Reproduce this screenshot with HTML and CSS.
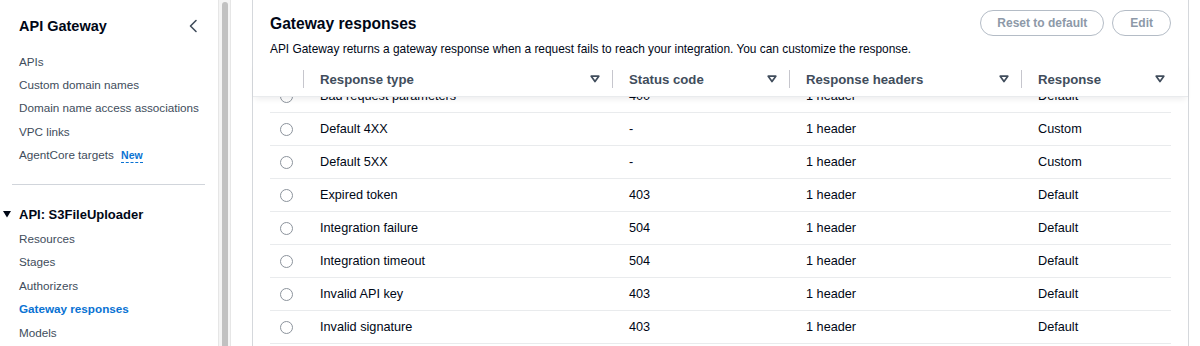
FILE: index.html
```html
<!DOCTYPE html>
<html lang="en">
<head>
    <meta charset="UTF-8">
    <meta name="viewport" content="width=device-width, initial-scale=1.0">
    <title>API Gateway - Gateway responses</title>
    <link rel="stylesheet" href="styles.css">
</head>
<body>
    <div class="page">
        <aside class="sidebar">
            <div class="side-head">
                <h2>API Gateway</h2>
                <button class="collapse" aria-label="Close navigation">
                    <svg width="10" height="14" viewBox="0 0 10 14"><path d="M8 1.5 L2.5 7 L8 12.5" fill="none" stroke="#414d5c" stroke-width="1.6" stroke-linecap="round" stroke-linejoin="round"/></svg>
                </button>
            </div>
            <ul class="side-nav">
                <li>APIs</li>
                <li>Custom domain names</li>
                <li>Domain name access associations</li>
                <li>VPC links</li>
                <li>AgentCore targets <span class="badge-new">New</span></li>
            </ul>
            <hr class="side-divider">
            <div class="side-section">
                <svg width="8" height="8" viewBox="0 0 8 8"><path d="M0 1 H8 L4 7.5 Z" fill="#000716"/></svg>
                <span>API: S3FileUploader</span>
            </div>
            <ul class="side-nav">
                <li>Resources</li>
                <li>Stages</li>
                <li>Authorizers</li>
                <li class="active">Gateway responses</li>
                <li>Models</li>
            </ul>
        </aside>

        <div class="scrollbar"><div class="thumb"></div></div>

        <main class="content">
            <section class="card">
                <div class="card-head">
                    <h1>Gateway responses</h1>
                    <div class="actions">
                        <button class="btn" disabled>Reset to default</button>
                        <button class="btn" disabled>Edit</button>
                    </div>
                </div>
                <p class="card-desc">API Gateway returns a gateway response when a request fails to reach your integration. You can customize the response.</p>

                <div class="table">
                    <div class="thead">
                        <div class="th"></div>
                        <div class="th"><span class="sep"></span><span class="label">Response type</span><svg class="sort" width="10" height="8" viewBox="0 0 10 8"><path d="M1.2 1.2 H8.8 L5 6.6 Z" fill="none" stroke="#414d5c" stroke-width="1.7" stroke-linejoin="round"/></svg></div>
                        <div class="th"><span class="sep"></span><span class="label">Status code</span><svg class="sort" width="10" height="8" viewBox="0 0 10 8"><path d="M1.2 1.2 H8.8 L5 6.6 Z" fill="none" stroke="#414d5c" stroke-width="1.7" stroke-linejoin="round"/></svg></div>
                        <div class="th"><span class="sep"></span><span class="label">Response headers</span><svg class="sort" width="10" height="8" viewBox="0 0 10 8"><path d="M1.2 1.2 H8.8 L5 6.6 Z" fill="none" stroke="#414d5c" stroke-width="1.7" stroke-linejoin="round"/></svg></div>
                        <div class="th last"><span class="sep"></span><span class="label">Response</span><svg class="sort" width="10" height="8" viewBox="0 0 10 8"><path d="M1.2 1.2 H8.8 L5 6.6 Z" fill="none" stroke="#414d5c" stroke-width="1.7" stroke-linejoin="round"/></svg></div>
                    </div>
                    <div class="tbody">
                        <div class="tr"><div class="td"><span class="radio"></span></div><div class="td">Bad request parameters</div><div class="td">400</div><div class="td">1 header</div><div class="td">Default</div></div>
                        <div class="tr"><div class="td"><span class="radio"></span></div><div class="td">Default 4XX</div><div class="td">-</div><div class="td">1 header</div><div class="td">Custom</div></div>
                        <div class="tr"><div class="td"><span class="radio"></span></div><div class="td">Default 5XX</div><div class="td">-</div><div class="td">1 header</div><div class="td">Custom</div></div>
                        <div class="tr"><div class="td"><span class="radio"></span></div><div class="td">Expired token</div><div class="td">403</div><div class="td">1 header</div><div class="td">Default</div></div>
                        <div class="tr"><div class="td"><span class="radio"></span></div><div class="td">Integration failure</div><div class="td">504</div><div class="td">1 header</div><div class="td">Default</div></div>
                        <div class="tr"><div class="td"><span class="radio"></span></div><div class="td">Integration timeout</div><div class="td">504</div><div class="td">1 header</div><div class="td">Default</div></div>
                        <div class="tr"><div class="td"><span class="radio"></span></div><div class="td">Invalid API key</div><div class="td">403</div><div class="td">1 header</div><div class="td">Default</div></div>
                        <div class="tr"><div class="td"><span class="radio"></span></div><div class="td">Invalid signature</div><div class="td">403</div><div class="td">1 header</div><div class="td">Default</div></div>
                    </div>
                </div>
            </section>
        </main>
    </div>
</body>
</html>
```

FILE: styles.css
```css
/* Reset */
* {
    margin: 0;
    padding: 0;
    box-sizing: border-box;
}

body {
    font-family: "Liberation Sans", Arial, sans-serif;
    background-color: #ffffff;
    color: #000716;
    height: 346px;
    overflow: hidden;
}

.page {
    display: flex;
    height: 346px;
}

/* Side navigation */
.sidebar {
    width: 218px;
    flex-shrink: 0;
    padding-top: 14px;
}

.side-head {
    display: flex;
    align-items: center;
    justify-content: space-between;
    height: 24px;
    padding: 0 20px 0 19px;
}

.side-head h2 {
    font-size: 14.5px;
    font-weight: bold;
    color: #000716;
}

.collapse {
    border: none;
    background: none;
    display: flex;
    padding: 0;
}

.side-nav {
    list-style: none;
    margin-top: 11.5px;
}

.side-nav li {
    font-size: 11.7px;
    line-height: 23.4px;
    padding-left: 19px;
    color: #414d5c;
}

.side-nav li.active {
    color: #0972d3;
    font-weight: bold;
}

.side-section + .side-nav {
    margin-top: 1px;
}

.badge-new {
    font-size: 10.5px;
    font-weight: bold;
    color: #0972d3;
    margin-left: 4px;
    border-bottom: 1px dashed #0972d3;
    padding-bottom: 1px;
}

.side-divider {
    border: none;
    border-top: 1px solid #d1d5db;
    margin: 16px 13px 0 12px;
}

.side-section {
    display: flex;
    align-items: center;
    gap: 8px;
    height: 24px;
    margin-top: 17.5px;
    padding-left: 3px;
    font-size: 13px;
    font-weight: bold;
    color: #000716;
}

/* Fake scrollbar */
.scrollbar {
    width: 13px;
    flex-shrink: 0;
    background-color: #f4f4f4;
    border-left: 1px solid #e6e6e6;
    border-right: 1px solid #e6e6e6;
    padding: 2px 2px 0 3px;
}

.thumb {
    height: 100%;
    background-color: #c1c1c1;
    border-radius: 4px 4px 0 0;
}

/* Content */
.content {
    flex: 1;
    padding: 0 11px 0 21px;
}

.card {
    height: 100%;
    border-left: 1px solid #d5d8dc;
    border-right: 1px solid #d5d8dc;
    padding: 10px 17px 0 17px;
}

.card-head {
    display: flex;
    align-items: center;
    justify-content: space-between;
    height: 26px;
}

.card-head h1 {
    font-size: 15.6px;
    font-weight: bold;
    color: #000716;
    padding-top: 1px;
}

.actions {
    display: flex;
    gap: 8px;
}

.btn {
    font-family: inherit;
    font-size: 12px;
    font-weight: bold;
    color: #8d99a8;
    background: #ffffff;
    border: 1.5px solid #b4bcc6;
    border-radius: 14px;
    height: 26px;
    padding: 0 16px;
}

.btn:last-child {
    padding: 0 17px;
}

.card-desc {
    font-size: 11.9px;
    line-height: 16px;
    margin-top: 5px;
    color: #000716;
}

/* Table */
.table {
    margin-top: 5px;
}

.thead,
.tr {
    display: grid;
    grid-template-columns: 33px 309px 177px 232px 1fr;
}

.thead {
    position: relative;
    z-index: 1;
    height: 35px;
    margin: 0 -17px;
    padding: 0 17px;
    background-color: #ffffff;
    border-bottom: 1px solid #e9ebed;
    box-shadow: 0 4px 6px -2px rgba(0, 7, 22, 0.08);
}

.th {
    display: flex;
    align-items: center;
    font-size: 13.2px;
    font-weight: bold;
    color: #414d5c;
}

.th .sep {
    width: 1px;
    height: 18px;
    background-color: #c6c6cd;
}

.th .label {
    margin-left: 16px;
}

.th .sort {
    margin-left: auto;
    margin-right: 12px;
}

.th.last .sort {
    margin-right: 6px;
}

.tbody {
    margin-top: -17px;
}

.tr {
    height: 33px;
    border-bottom: 1px solid #e9ebed;
}

.td {
    display: flex;
    align-items: center;
    padding-left: 17px;
    font-size: 12.7px;
    color: #000716;
}

.td:first-child {
    padding-left: 0;
    justify-content: center;
}

.radio {
    width: 13px;
    height: 13px;
    border: 1px solid #8c939c;
    border-radius: 50%;
}
```
